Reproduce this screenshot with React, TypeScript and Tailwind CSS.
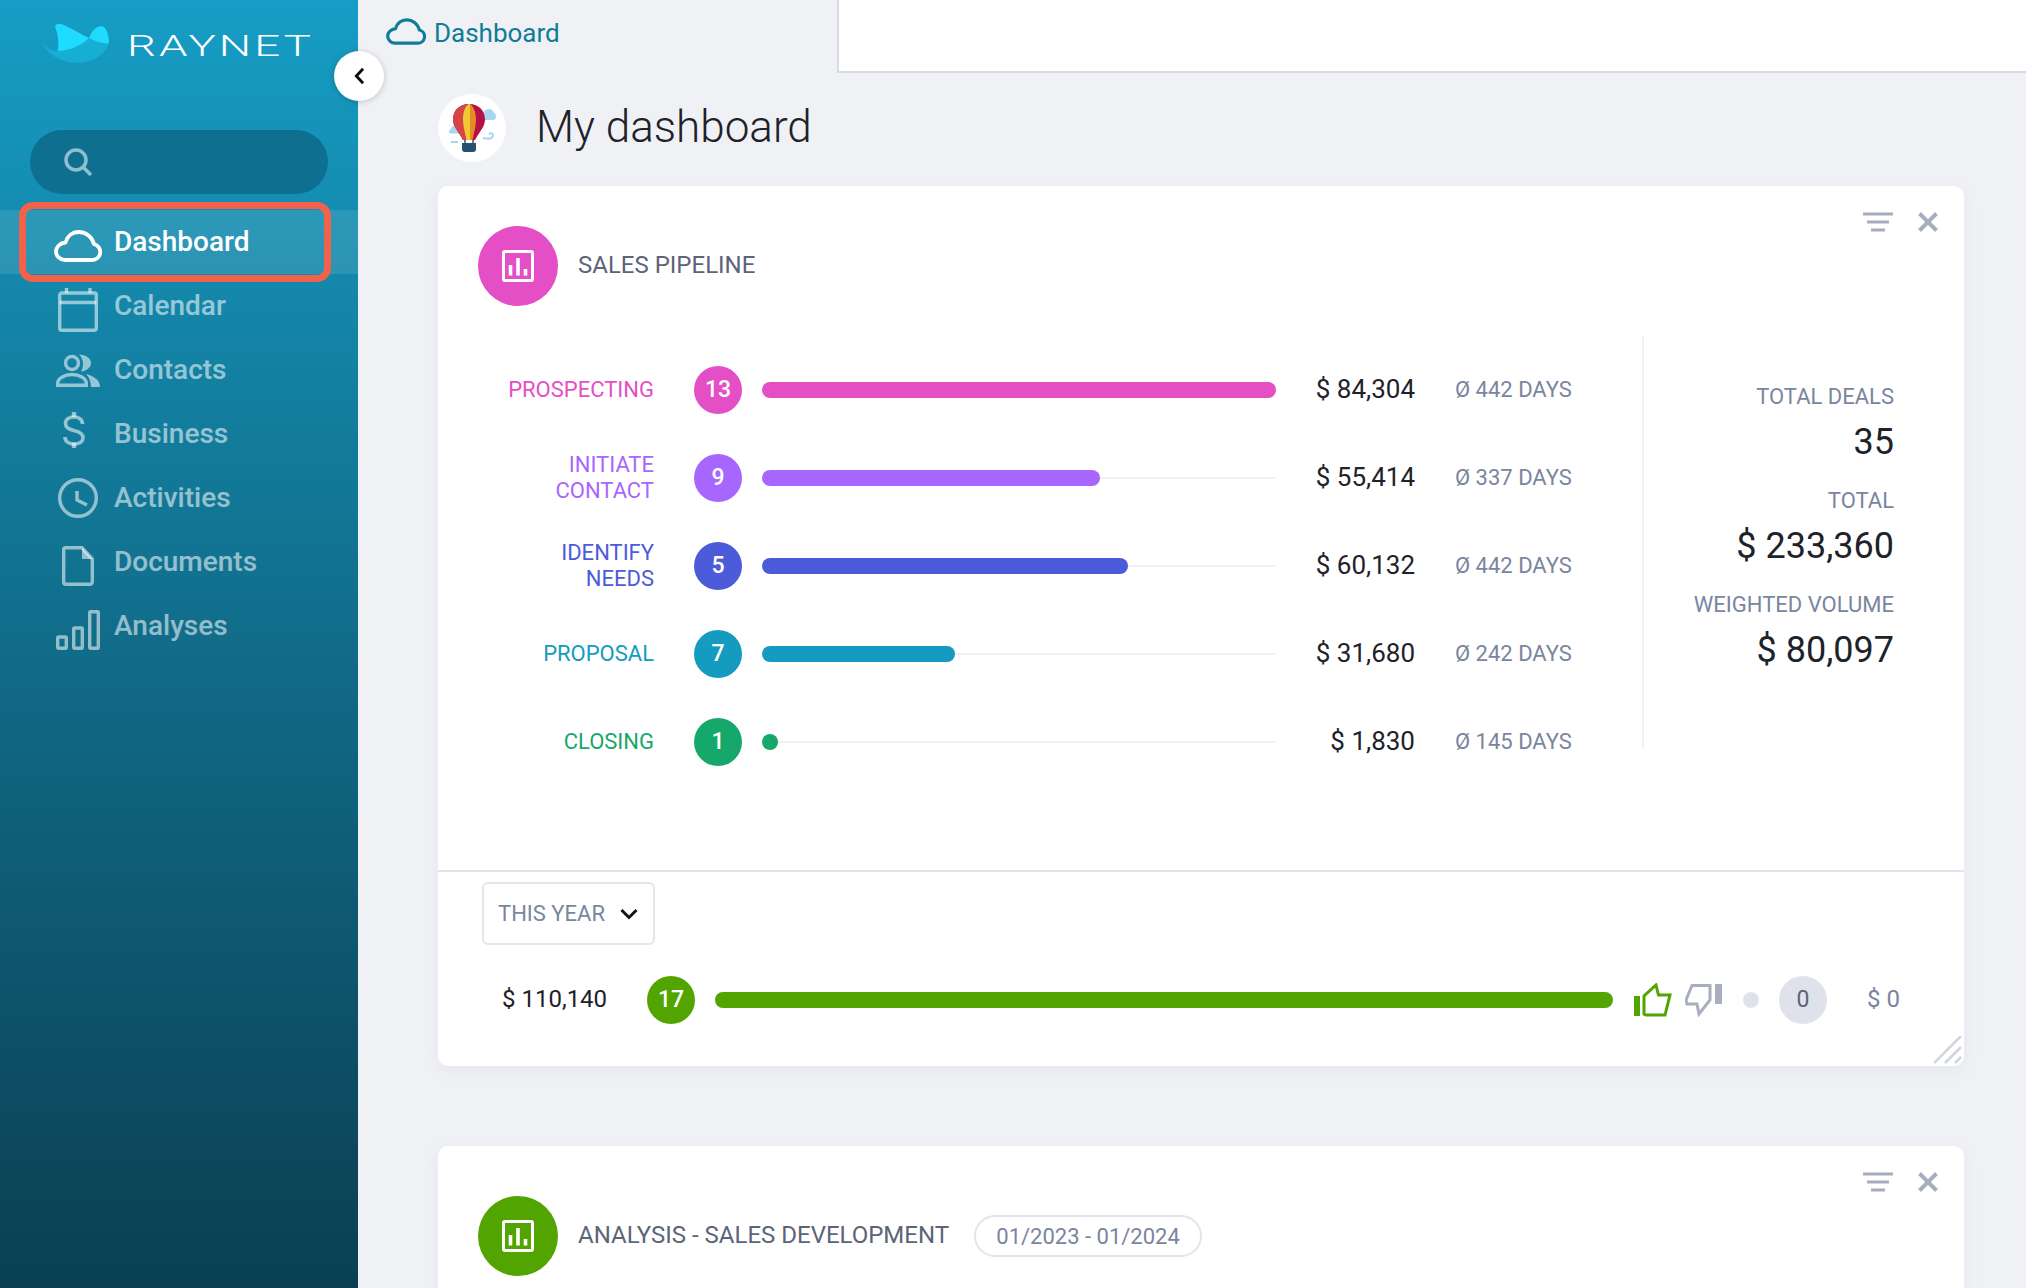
import { ReactNode } from "react";

const stages = [
  { label: ["PROSPECTING"], count: 13, width: "w-[514px]", value: "$ 84,304", days: "Ø 442 DAYS", text: "text-[#e44fc5]", bg: "bg-[#e44fc5]" },
  { label: ["INITIATE", "CONTACT"], count: 9, width: "w-[338px]", value: "$ 55,414", days: "Ø 337 DAYS", text: "text-[#a766fd]", bg: "bg-[#a766fd]" },
  { label: ["IDENTIFY", "NEEDS"], count: 5, width: "w-[366px]", value: "$ 60,132", days: "Ø 442 DAYS", text: "text-[#4c5bd9]", bg: "bg-[#4c5bd9]" },
  { label: ["PROPOSAL"], count: 7, width: "w-[193px]", value: "$ 31,680", days: "Ø 242 DAYS", text: "text-[#149bbf]", bg: "bg-[#149bbf]" },
  { label: ["CLOSING"], count: 1, width: "w-[16px]", value: "$ 1,830", days: "Ø 145 DAYS", text: "text-[#16a86a]", bg: "bg-[#16a86a]" },
];

function CloudIcon({ className }: { className: string }) {
  return (
    <svg viewBox="0 0 48 32" className={className} fill="none" stroke="currentColor" strokeWidth="3.800" strokeLinejoin="round">
      <path d="M11 30h27a8 8 0 0 0 2-15.8C38.500 7 32 2 25 2 18 2 13 6.500 11.500 12.500 6 13 2 17 2 21.500 2 26 6 30 11 30Z" />
    </svg>
  );
}

function CalendarIcon() {
  return (
    <svg viewBox="0 0 40 44" className="w-10 h-11" fill="none" stroke="currentColor" strokeWidth="3.400">
      <rect x="1.700" y="5" width="36.600" height="37.300" rx="2" />
      <path d="M1.700 14.500h36.600M8.500 0v5M32 0v5" />
    </svg>
  );
}

function ContactsIcon() {
  return (
    <svg viewBox="0 0 44 33" className="w-11 h-[33px]" fill="none" stroke="currentColor" strokeWidth="3.400">
      <circle cx="16" cy="9" r="6.500" />
      <path d="M1.700 31.300v-2C1.700 24 9 20.500 16 20.500S30.300 24 30.300 29.300v2Z" />
      <path d="M23 .5C29 .5 35 4 35 9c0 4-4 8-10 8.500C28 13 28 5 23 .5Z" fill="currentColor" stroke="none" />
      <path d="M30 20c8 2 14 6 14 13h-9c0-5-2-10-5-13Z" fill="currentColor" stroke="none" />
    </svg>
  );
}

function DollarIcon() {
  return (
    <svg viewBox="0 0 22 36" className="w-[22px] h-9" fill="none" stroke="currentColor" strokeWidth="3.600">
      <path d="M19.500 12C19.500 7.500 16 5 11 5 6 5 2.500 7.500 2.500 11.500c0 4.500 4 6 8.500 7 5 1.200 9 2.800 9 7 0 4-3.500 6.500-9 6.500-5.500 0-9-2.500-9-7" />
      <path d="M11 0v5M11 31v5" strokeWidth="4.400" />
    </svg>
  );
}

function ClockIcon() {
  return (
    <svg viewBox="0 0 40 40" className="w-10 h-10" fill="none" stroke="currentColor" strokeWidth="3.400">
      <circle cx="20" cy="20" r="18.300" />
      <path d="M19 13v9l10 5" />
    </svg>
  );
}

function FileIcon() {
  return (
    <svg viewBox="0 0 32 40" className="w-8 h-10" fill="none" stroke="currentColor" strokeWidth="3.400">
      <path d="M3.500 1.700H20L30.300 13v23a2.300 2.300 0 0 1-2.300 2.300H4A2.300 2.300 0 0 1 1.700 36V3.500a2 2 0 0 1 1.800-1.800Z" />
      <path d="M20 1.700V13h10.300Z" fill="currentColor" stroke="none" />
    </svg>
  );
}

function BarsIcon() {
  return (
    <svg viewBox="0 0 44 40" className="w-11 h-10" fill="none" stroke="currentColor" strokeWidth="3.400">
      <rect x="1.700" y="27" width="8.600" height="11.300" rx="1" />
      <rect x="17.700" y="18" width="8.600" height="20.300" rx="1" />
      <rect x="33.700" y="1.700" width="8.600" height="36.600" rx="1" />
    </svg>
  );
}

function ChartIcon() {
  return (
    <svg viewBox="0 0 32 32" className="w-8 h-8" fill="none" stroke="white">
      <rect x="1.500" y="1.500" width="29" height="29" rx="1.500" strokeWidth="3" />
      <path d="M8.500 15v10.500M16 8v17.500M23.500 19v6.500" strokeWidth="3.600" />
    </svg>
  );
}

function FilterIcon() {
  return (
    <svg viewBox="0 0 30 20" className="w-[30px] h-5" stroke="#a9aebf" strokeWidth="3">
      <path d="M0 2h30M4 10h22M8 18h14" />
    </svg>
  );
}

function CloseIcon() {
  return (
    <svg viewBox="0 0 20 20" className="w-5 h-5" stroke="#a9aebf" strokeWidth="4">
      <path d="M1.500 1.500l17 17M18.500 1.500l-17 17" />
    </svg>
  );
}

function CardTools() {
  return (
    <div className="absolute top-[26px] right-[26px] flex items-center gap-[25px]">
      <FilterIcon />
      <CloseIcon />
    </div>
  );
}

function Balloon() {
  return (
    <svg viewBox="0 0 68 68" className="w-[68px] h-[68px] rounded-full bg-white">
      <path d="M43 24c0-5 4-9 8-9 2.500 0 4 1.500 5 4 1.500.5 2 2 2 3.500s-1 3.500-3 3.500H45c-1.500 0-2-1-2-2Z" fill="#a9d5f0" />
      <path d="M13 39.500c-1.500 0-2-1-2-2s1-2 2-2.500c.5-2.500 3-4 5-4l4 8.500Z" fill="#a9d5f0" />
      <path d="M45 44c4 1 9 1 10-2 .5-2-2-3.500-4-2M13 48h7" fill="none" stroke="#a9d5f0" strokeWidth="2" />
      <path d="M31 10c-10 0-16 7-16 15.500C15 33 21 38 25 46h12c4-8 10-13 10-20.500C47 17 41 10 31 10Z" fill="#b80f45" />
      <path d="M31 10c-10 0-16 7-16 15.500C15 33 21 38 25 46h6Z" fill="#d64545" />
      <path d="M31 10c-4 2-6 8-6 15.500 0 7 2 13 3.500 20.500H32V10Z" fill="#f2c832" />
      <path d="M32 10c3.500 2 6 8 6 15.500 0 7-2 13-3.500 20.500H32Z" fill="#e58a25" />
      <path d="M27 46v3M35 46v3" stroke="#28506e" strokeWidth="1.500" />
      <path d="M24 49h14v6a3 3 0 0 1-3 3h-8a3 3 0 0 1-3-3Z" fill="#28506e" />
    </svg>
  );
}

function NavItem({ icon, label, active, iconClass }: { icon: ReactNode; label: string; active?: boolean; iconClass: string }) {
  return (
    <div className={`relative h-16 flex items-center pl-[54px] ${active ? "bg-white/10 text-white" : "text-white/55"}`}>
      <div className={`w-12 flex justify-center ${iconClass}`}>{icon}</div>
      <span className="ml-3 text-[28px] font-medium">{label}</span>
      {active && <div className="absolute -top-2 -bottom-2 left-[19px] w-[312px] border-[7px] border-[#f0624a] rounded-[14px]" />}
    </div>
  );
}

function Sidebar() {
  return (
    <aside className="w-[358px] h-[1288px] shrink-0 bg-gradient-to-b from-[#169dc5] to-[#0a3f52]">
      <div className="h-[130px] pt-6 pl-[42px] flex items-start">
        <svg viewBox="0 0 205 118" className="w-[68px] h-[39px]">
          <path d="M0 57c15 18 30 27 47 25 43-2 78-22 95-40 18 10 38 16 60 18-12 35-52 57-97 57C55 117 20 95 0 57Z" fill="#17aed4" />
          <path d="M142 42c8-22 23-37 40-35 15 5 21 33 20 53-22-2-42-8-60-18Z" fill="#1fdcff" />
          <path d="M40 4c5-6 20-4 30 1 25 12 50 27 72 37-17 18-52 38-95 40 5-27 1-52-7-70Z" fill="#1fdcff" />
        </svg>
        <span className="ml-[17px] mt-[3px] text-[30px] leading-[38px] font-light text-white tracking-[2px] origin-left scale-x-[1.52]">RAYNET</span>
      </div>
      <div className="mx-[30px] h-16 rounded-full bg-[#0f6f90] flex items-center pl-[34px]">
        <svg viewBox="0 0 28 28" className="w-7 h-7" fill="none" stroke="#8cc0cf" strokeWidth="3.500">
          <circle cx="12" cy="12" r="10" />
          <path d="M19 19l8 8" />
        </svg>
      </div>
      <nav className="mt-4">
        <NavItem icon={<CloudIcon className="w-12 h-8" />} label="Dashboard" active iconClass="mt-2" />
        <NavItem icon={<CalendarIcon />} label="Calendar" iconClass="mt-2" />
        <NavItem icon={<ContactsIcon />} label="Contacts" iconClass="" />
        <NavItem icon={<DollarIcon />} label="Business" iconClass="mb-2 pr-[8px]" />
        <NavItem icon={<ClockIcon />} label="Activities" iconClass="" />
        <NavItem icon={<FileIcon />} label="Documents" iconClass="mt-2" />
        <NavItem icon={<BarsIcon />} label="Analyses" iconClass="mt-2" />
      </nav>
    </aside>
  );
}

function StageRow({ stage }: { stage: (typeof stages)[number] }) {
  return (
    <div className="h-[88px] flex items-center">
      <div className={`w-[176px] text-right text-[22px] leading-[26px] ${stage.text}`}>
        {stage.label.map((l) => (
          <div key={l}>{l}</div>
        ))}
      </div>
      <div className={`ml-10 w-12 h-12 rounded-full flex items-center justify-center text-white text-[23px] font-medium ${stage.bg}`}>{stage.count}</div>
      <div className="relative ml-5 w-[514px] h-4 flex items-center">
        <div className="w-full h-[2px] bg-[#f0f1f5]" />
        <div className={`absolute left-0 top-0 h-4 rounded-full ${stage.width} ${stage.bg}`} />
      </div>
      <div className="w-[139px] -mt-[2px] text-right text-[26px] text-[#1e2229]">{stage.value}</div>
      <div className="ml-10 -mt-[2px] text-[22px] text-[#7a859e]">{stage.days}</div>
    </div>
  );
}

function Stat({ label, value }: { label: string; value: string }) {
  return (
    <div className="mb-[22px]">
      <div className="h-7 leading-7 text-[22px] text-[#7a859e]">{label}</div>
      <div className="mt-2 h-[46px] leading-[46px] text-[36px] text-[#1e2229]">{value}</div>
    </div>
  );
}

function PipelineCard() {
  return (
    <section className="relative h-[880px] bg-white rounded-[10px] shadow-[0_4px_16px_rgba(120,130,160,0.08)]">
      <CardTools />
      <div className="pt-10 pl-10 flex items-center gap-5">
        <div className="w-20 h-20 rounded-full bg-[#e44fc5] flex items-center justify-center">
          <ChartIcon />
        </div>
        <h2 className="-mt-[2px] text-[24px] text-[#5b6478]">SALES PIPELINE</h2>
      </div>
      <div className="mt-[30px] h-[534px] pl-10 flex items-start">
        <div className="w-[1164px] pt-[10px]">
          {stages.map((s) => (
            <StageRow key={s.value} stage={s} />
          ))}
        </div>
        <div className="h-[412px] w-[252px] border-l-2 border-[#f0f1f5] pt-[47px] text-right">
          <Stat label="TOTAL DEALS" value="35" />
          <Stat label="TOTAL" value="$ 233,360" />
          <Stat label="WEIGHTED VOLUME" value="$ 80,097" />
        </div>
      </div>
      <div className="border-t-2 border-[#e2e4ed] pt-[10px]">
        <div className="ml-11 w-[173px] h-[63px] border-2 border-[#e4e6ee] rounded-md flex items-center pl-[14px]">
          <span className="text-[22px] text-[#7a859e]">THIS YEAR</span>
          <svg viewBox="0 0 18 12" className="ml-[15px] w-[18px] h-3" fill="none" stroke="#101317" strokeWidth="3">
            <path d="M1.500 2l7.500 7.500L16.500 2" />
          </svg>
        </div>
        <div className="mt-[31px] pl-16 pr-[64px] flex items-center">
          <div className="w-[145px] -mt-[2px] text-[24px] text-[#1e2229]">$ 110,140</div>
          <div className="w-12 h-12 rounded-full bg-[#52a400] flex items-center justify-center text-white text-[23px] font-medium">17</div>
          <div className="ml-5 w-[898px] h-4 rounded-full bg-[#52a400]" />
          <svg viewBox="0 0 38 34" className="ml-[21px] w-[38px] h-[34px]" fill="none" stroke="#52a400" strokeWidth="3">
            <path d="M0 13h6v20H0Z" fill="#52a400" stroke="none" />
            <path d="M10 31V13L22 2l2.500 10H36l-5 20H12Z" />
          </svg>
          <svg viewBox="0 0 37 33" className="ml-[13px] w-[37px] h-[33px]" fill="none" stroke="#a9aebf" strokeWidth="3">
            <path d="M30 0h7v20h-7Z" fill="#a9aebf" stroke="none" />
            <path d="M2 20 1 16 7 1.500H25V16L14 30l-2-10Z" />
          </svg>
          <div className="ml-[21px] w-4 h-4 rounded-full bg-[#dfe2ea]" />
          <div className="ml-5 w-12 h-12 rounded-full bg-[#dfe2ea] flex items-center justify-center text-[23px] text-[#5b6478]">0</div>
          <div className="ml-auto -mt-[2px] text-[24px] text-[#7a859e]">$ 0</div>
        </div>
      </div>
      <svg viewBox="0 0 28 28" className="absolute right-[2px] bottom-[2px] w-7 h-7" stroke="#d3d5de" strokeWidth="2.600">
        <path d="M0 27L27 0M11 27L27 11M21 27l6-6" />
      </svg>
    </section>
  );
}

function AnalysisCard() {
  return (
    <section className="relative mt-20 h-[400px] bg-white rounded-[10px] shadow-[0_4px_16px_rgba(120,130,160,0.08)]">
      <CardTools />
      <div className="pt-[50px] pl-10 flex items-center gap-5">
        <div className="w-20 h-20 rounded-full bg-[#52a400] flex items-center justify-center">
          <ChartIcon />
        </div>
        <h2 className="-mt-[2px] text-[24px] text-[#5b6478]">ANALYSIS - SALES DEVELOPMENT</h2>
        <div className="ml-[5px] w-[228px] h-[42px] rounded-full border-2 border-[#e2e4ed] flex items-center justify-center text-[22px] text-[#7a859e]">01/2023 - 01/2024</div>
      </div>
    </section>
  );
}

export default function App() {
  return (
    <div className="relative w-[2026px] h-[1288px] overflow-hidden flex bg-[#eff1f5] font-['Roboto',sans-serif]">
      <Sidebar />
      <div className="w-[50px] h-[50px] absolute left-[334px] top-[51px] rounded-full bg-white shadow-[0_1px_6px_rgba(0,0,0,0.2)] flex items-center justify-center">
        <svg viewBox="0 0 12 20" className="w-[11px] h-[18px]" fill="none" stroke="#0b0d10" strokeWidth="3.200">
          <path d="M10 2L2.500 10 10 18" />
        </svg>
      </div>
      <main className="flex-1 min-w-0">
        <div className="h-[73px] flex">
          <div className="w-[479px] flex items-start pl-7 pt-[18px] text-[#0f7c98]">
            <CloudIcon className="w-10 h-[27px]" />
            <span className="ml-2 -mt-1 text-[26px]">Dashboard</span>
          </div>
          <div className="flex-1 bg-white border-l-2 border-b-2 border-[#d8dbe4]" />
        </div>
        <div className="mt-[21px] pl-20 flex items-center">
          <Balloon />
          <h1 className="ml-[30px] -mt-[2px] text-[44px] font-light text-[#1e2229]">My dashboard</h1>
        </div>
        <div className="mt-6 ml-20 mr-[62px]">
          <PipelineCard />
          <AnalysisCard />
        </div>
      </main>
    </div>
  );
}
